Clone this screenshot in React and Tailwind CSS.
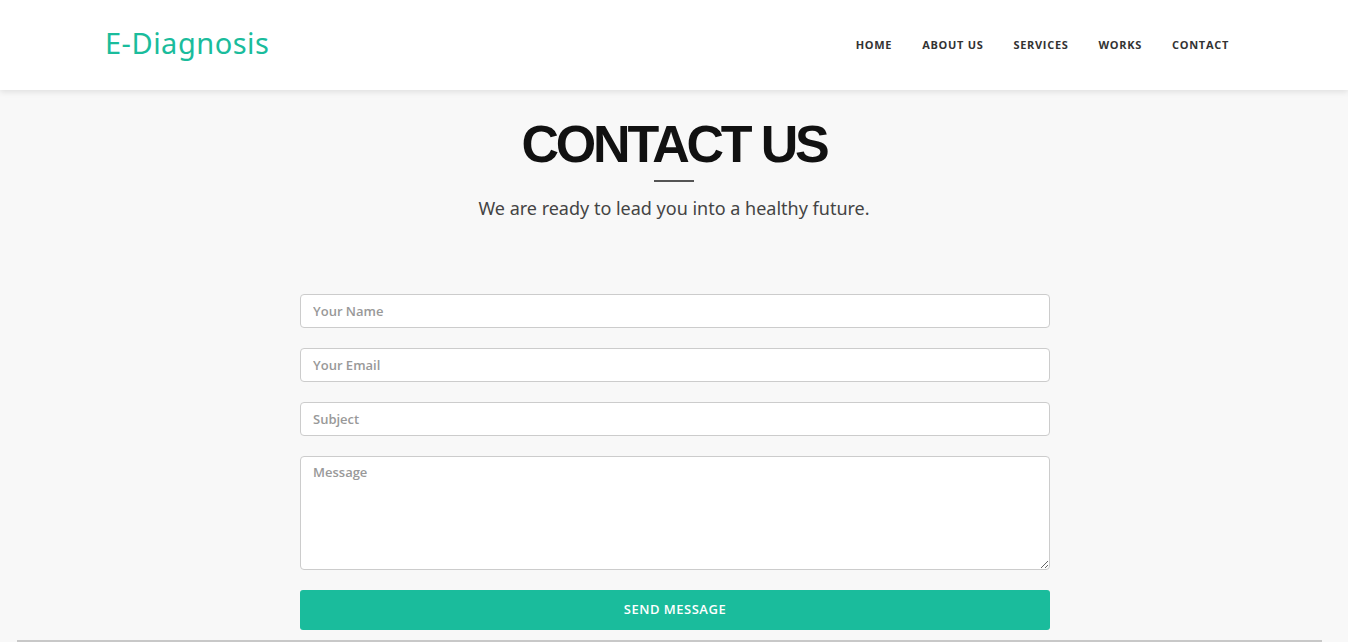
export default function App() {
  const inputCls =
    "block w-full h-[34px] rounded-[4px] border border-[#cccccc] bg-white px-[12px] text-[13px] font-semibold text-[#555] placeholder:text-[#999] outline-none";
  return (
    <div className="min-h-[642px] bg-[#f8f8f8] relative overflow-hidden" style={{ fontFamily: '"Open Sans", sans-serif' }}>
      <header className="h-[90px] bg-white shadow-[0_2px_6px_rgba(0,0,0,0.1)] relative z-10 flex items-center justify-between pl-[105px] pr-[119px]">
        <div className="text-[29px] text-[#1abc9c] tracking-[0.5px] leading-none -mt-[6px]" style={{ fontFamily: '"Noto Sans", sans-serif' }}>
          E-Diagnosis
        </div>
        <nav className="flex gap-[30px] text-[11px] font-bold tracking-[0.7px] text-[#333] uppercase">
          <span>Home</span>
          <span>About Us</span>
          <span>Services</span>
          <span>Works</span>
          <span>Contact</span>
        </nav>
      </header>
      <section className="flex flex-col items-center pt-[24px]">
        <h1 className="text-[52px] font-bold leading-[60px] text-[#111] tracking-[-3.2px]" style={{ fontFamily: '"Liberation Sans", Arial, sans-serif' }}>
          CONTACT US
        </h1>
        <div className="w-[40px] h-[2px] bg-[#555] mt-[6px]" />
        <p className="mt-[13px] text-[18px] text-[#444] leading-[26px]" style={{ fontFamily: '"Noto Sans", sans-serif' }}>
          We are ready to lead you into a healthy future.
        </p>
        <form className="w-[750px] mt-[73px] ml-[2px] flex flex-col gap-[20px]" onSubmit={(e) => e.preventDefault()}>
          <input className={inputCls} placeholder="Your Name" />
          <input className={inputCls} placeholder="Your Email" />
          <input className={inputCls} placeholder="Subject" />
          <textarea className="block w-full h-[114px] rounded-[4px] border border-[#cccccc] bg-white px-[12px] py-[6px] text-[13px] font-semibold text-[#555] placeholder:text-[#999] outline-none resize-y" placeholder="Message" />
          <button className="h-[40px] w-full rounded-[3px] bg-[#1abc9c] text-white text-[13px] font-semibold tracking-[0.5px] uppercase">
            Send Message
          </button>
        </form>
      </section>
      <div className="absolute left-[17px] right-[26px] bottom-0 h-[2px] bg-[#c8c8c8]" />
    </div>
  );
}
